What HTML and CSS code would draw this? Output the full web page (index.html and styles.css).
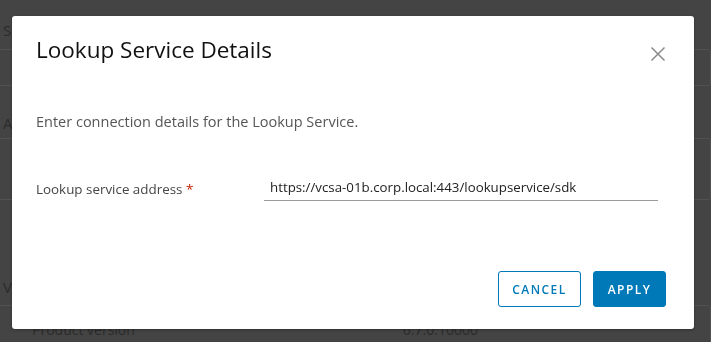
FILE: index.html
```html
<!DOCTYPE html>
<html>
<head>
<meta charset="utf-8">
<link rel="stylesheet" href="styles.css">
</head>
<body>
<div class="page">
  <div class="sec">S</div>
  <div class="card card-1"></div>
  <div class="sec sec-a">A</div>
  <div class="card card-2"></div>
  <div class="sec sec-v">V</div>
  <div class="card card-3"><span class="pv">Product version</span><span class="pv-val">6.7.0.10000</span></div>
</div>
<div class="overlay">
  <div class="modal">
    <div class="modal-header">
      <h3 class="modal-title">Lookup Service Details</h3>
      <button class="close" aria-label="Close">
        <svg width="16" height="16" viewBox="0 0 16 16"><path d="M1.5 1.5 L14.5 14.5 M14.5 1.5 L1.5 14.5" stroke="#8a8a8a" stroke-width="1.5" fill="none"/></svg>
      </button>
    </div>
    <p class="intro">Enter connection details for the Lookup Service.</p>
    <div class="form-row">
      <label class="label">Lookup service address <span class="req">*</span></label>
      <div class="input">https://vcsa-01b.corp.local:443/lookupservice/sdk</div>
    </div>
    <div class="footer">
      <button class="btn btn-outline">CANCEL</button>
      <button class="btn btn-primary">APPLY</button>
    </div>
  </div>
</div>
</body>
</html>
```
FILE: styles.css
```css
html, body {
  margin: 0;
  padding: 0;
  background: #444444;
  height: 100%;
  overflow: hidden;
  font-family: "Open Sans", Lato, sans-serif;
}
.page {
  height: 342px;
  overflow: hidden;
  box-sizing: border-box;
  padding: 21px 0 0 3px;
  color: #2b2b2b;
}
.sec {
  font-size: 15px;
  line-height: 18px;
}
.card {
  border: 1px solid #525252;
  border-radius: 3px;
  margin-left: -6px;
}
.card-1 { height: 35px; margin-top: 10px; }
.sec-a { margin-top: 28px; }
.card-2 { height: 60px; margin-top: 6px; }
.sec-v { margin-top: 78px; }
.card-3 { height: 40px; margin-top: 9px; display: flex; padding: 14px 0 0 34px; font-size: 14px; }
.pv-val { margin-left: 268px; }
.overlay {
  position: fixed;
  inset: 0;
}
.modal {
  position: absolute;
  left: 12px;
  top: 16px;
  width: 682px;
  height: 313px;
  box-sizing: border-box;
  background: #fff;
  border-radius: 3px;
  box-shadow: 0 1px 3px rgba(0,0,0,0.3);
  padding: 20px 28px 22px 24px;
  display: flex;
  flex-direction: column;
}
.modal-header {
  display: flex;
  justify-content: space-between;
  align-items: flex-start;
  height: 28px;
}
.modal-title {
  margin: 0;
  font-size: 22.5px;
  line-height: 28px;
  font-weight: 400;
  color: #111;
}
.close {
  border: 0;
  background: none;
  padding: 0;
  margin-top: 10px;
  width: 16px;
  height: 16px;
  display: block;
}
.close svg { display: block; }
.intro {
  margin: 48px 0 0;
  font-size: 14.5px;
  line-height: 20px;
  color: #565656;
}
.form-row {
  display: flex;
  align-items: flex-end;
  margin-top: 46px;
  padding-right: 8px;
}
.label {
  width: 228px;
  flex: none;
  font-size: 13.4px;
  line-height: 18px;
  color: #454545;
  padding-bottom: 3px;
}
.req { color: #c92100; }
.input {
  flex: 1;
  font-size: 13.3px;
  line-height: 18px;
  color: #222;
  padding: 0 0 4px 6px;
  border-bottom: 1px solid #9a9a9a;
}
.footer {
  margin-top: auto;
  display: flex;
  justify-content: flex-end;
  gap: 12px;
}
.btn {
  height: 36px;
  box-sizing: border-box;
  border-radius: 3px;
  font-family: "Open Sans", sans-serif;
  font-size: 12px;
  font-weight: 600;
  letter-spacing: 0.12em;
  padding: 0 8px;
}
.btn-outline {
  width: 83px;
  background: #fff;
  border: 1px solid #0079b8;
  color: #0079b8;
}
.btn-primary {
  width: 73px;
  background: #0079b8;
  border: 1px solid #0079b8;
  color: #fff;
}
```
